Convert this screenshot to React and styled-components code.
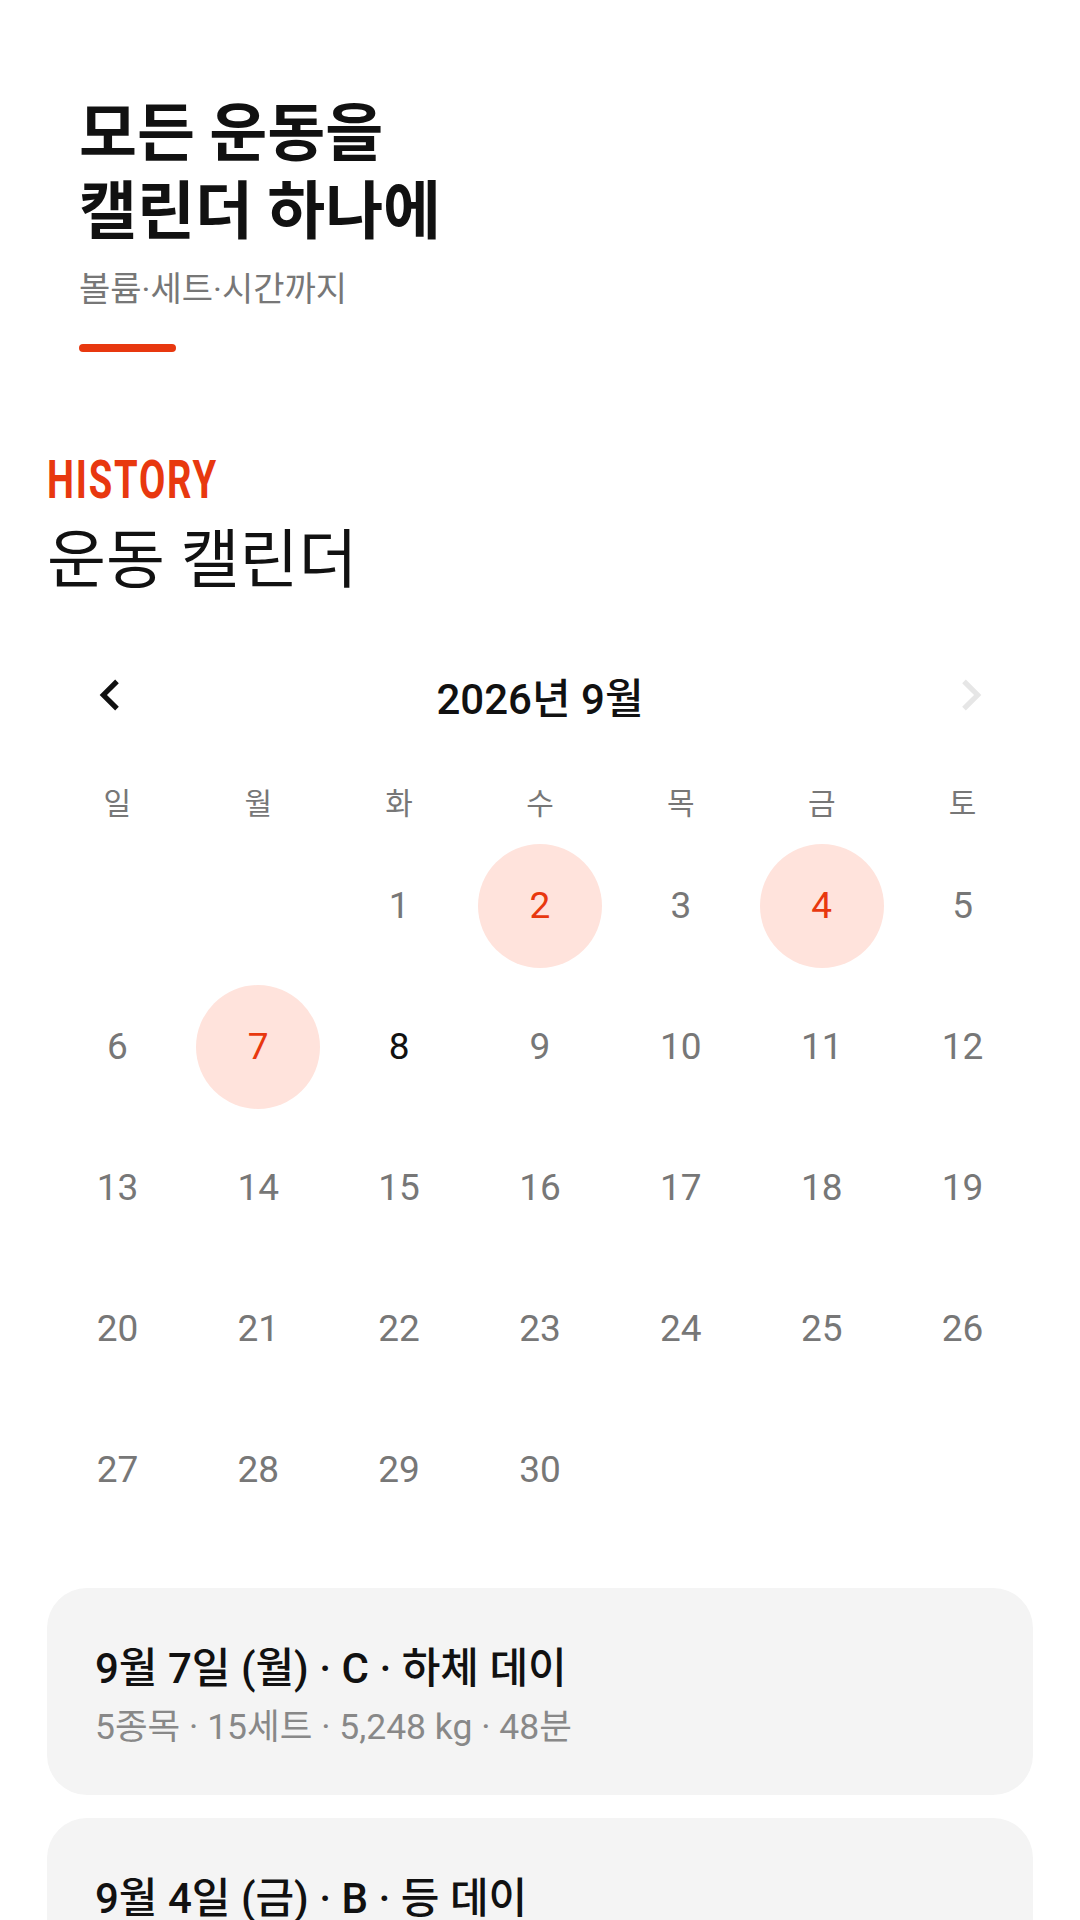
import React from "react";
import styled, { createGlobalStyle } from "styled-components";

const GlobalStyle = createGlobalStyle`
  html, body {
    margin: 0;
    padding: 0;
    background: #ffffff;
  }
  body {
    font-family: Roboto, "Noto Sans CJK KR", sans-serif;
    color: #111111;
  }
  * {
    box-sizing: border-box;
  }
`;

const ACCENT = "#e8380f";

const Page = styled.div`
  padding: 0 47px 60px 47px;
`;

const Hero = styled.header`
  padding: 89px 0 0 32px;
`;

const Headline = styled.h1`
  margin: 0;
  font-family: "Noto Sans CJK KR", Roboto, sans-serif;
  font-size: 63px;
  line-height: 78px;
  font-weight: 700;
  color: #111111;
`;

const Tagline = styled.p`
  margin: 22px 0 0 0;
  font-size: 34px;
  line-height: 44px;
  color: #777777;
`;

const AccentBar = styled.div`
  width: 97px;
  height: 8px;
  margin-top: 33px;
  border-radius: 4px;
  background: ${ACCENT};
`;

const SectionHead = styled.div`
  margin-top: 102px;
`;

const Eyebrow = styled.div`
  display: inline-block;
  font-family: Roboto, sans-serif;
  font-size: 53px;
  line-height: 53px;
  font-weight: 700;
  letter-spacing: 2.5px;
  color: ${ACCENT};
  transform: scaleX(0.72);
  transform-origin: left center;
`;

const SectionTitle = styled.h2`
  margin: 16px 0 0 0;
  font-size: 64px;
  line-height: 76px;
  font-weight: 400;
  color: #111111;
`;

const MonthBar = styled.div`
  display: grid;
  grid-template-columns: 1fr auto 1fr;
  align-items: center;
  height: 80px;
  margin-top: 56px;
`;

const NavButton = styled.button`
  display: flex;
  align-items: center;
  justify-content: center;
  width: 62px;
  height: 62px;
  padding: 0;
  border: none;
  background: transparent;
  color: ${(p) => (p.$disabled ? "#e6e6e6" : "#111111")};
  justify-self: ${(p) => (p.$side === "left" ? "start" : "end")};
  margin: ${(p) => (p.$side === "left" ? "0 0 0 32px" : "0 31px 0 0")};
`;

const MonthLabel = styled.div`
  font-size: 42px;
  font-weight: 500;
  color: #111111;
`;

const WeekRow = styled.div`
  display: grid;
  grid-template-columns: repeat(7, 1fr);
  height: 66px;
  margin-top: 33px;
  align-items: center;
`;

const WeekDay = styled.div`
  text-align: center;
  font-size: 30px;
  color: #777777;
`;

const DateGrid = styled.div`
  display: grid;
  grid-template-columns: repeat(7, 1fr);
  grid-auto-rows: 141px;
  margin-top: 1px;
`;

const DateCell = styled.div`
  display: flex;
  align-items: center;
  justify-content: center;
`;

const DateDot = styled.div`
  display: flex;
  align-items: center;
  justify-content: center;
  width: 124px;
  height: 124px;
  border-radius: 50%;
  font-size: 37px;
  background: ${(p) => (p.$done ? "#ffe3dc" : "transparent")};
  color: ${(p) => (p.$done ? ACCENT : p.$today ? "#111111" : "#777777")};
`;

const CardList = styled.div`
  display: flex;
  flex-direction: column;
  gap: 23px;
  margin-top: 48px;
`;

const Card = styled.div`
  background: #f4f4f4;
  border-radius: 40px;
  padding: 55px 48px 46px 48px;
`;

const CardTitle = styled.div`
  font-size: 42px;
  line-height: 52px;
  font-weight: 500;
  color: #111111;
`;

const CardMeta = styled.div`
  margin-top: 10px;
  font-size: 35.5px;
  line-height: 44px;
  color: #888888;
`;

const Chevron = ({ dir }) => (
  <svg width="62" height="62" viewBox="0 0 24 24" fill="currentColor">
    {dir === "left" ? (
      <path d="M15.41 7.41L14 6l-6 6 6 6 1.41-1.41L10.83 12z" />
    ) : (
      <path d="M10 6L8.59 7.41 13.17 12l-4.58 4.59L10 18l6-6z" />
    )}
  </svg>
);

const weekDays = ["일", "월", "화", "수", "목", "금", "토"];

// September 2026 starts on a Tuesday
const firstOffset = 2;
const daysInMonth = 30;
const doneDays = [2, 4, 7];
const today = 8;

const sessions = [
  {
    title: "9월 7일 (월) · C · 하체 데이",
    meta: "5종목 · 15세트 · 5,248 kg · 48분",
  },
  {
    title: "9월 4일 (금) · B · 등 데이",
    meta: "5종목 · 16세트 · 4,310 kg · 52분",
  },
  {
    title: "9월 2일 (수) · A · 가슴 데이",
    meta: "4종목 · 14세트 · 3,870 kg · 45분",
  },
];

const App = () => {
  const cells = [];
  for (let i = 0; i < firstOffset; i++) cells.push(null);
  for (let d = 1; d <= daysInMonth; d++) cells.push(d);

  return (
    <Page>
      <GlobalStyle />
      <Hero>
        <Headline>
          모든 운동을
          <br />
          캘린더 하나에
        </Headline>
        <Tagline>볼륨·세트·시간까지</Tagline>
        <AccentBar />
      </Hero>

      <SectionHead>
        <Eyebrow>HISTORY</Eyebrow>
        <SectionTitle>운동 캘린더</SectionTitle>
      </SectionHead>

      <MonthBar>
        <NavButton $side="left" aria-label="이전 달">
          <Chevron dir="left" />
        </NavButton>
        <MonthLabel>2026년 9월</MonthLabel>
        <NavButton $side="right" $disabled aria-label="다음 달">
          <Chevron dir="right" />
        </NavButton>
      </MonthBar>

      <WeekRow>
        {weekDays.map((w) => (
          <WeekDay key={w}>{w}</WeekDay>
        ))}
      </WeekRow>

      <DateGrid>
        {cells.map((d, i) => (
          <DateCell key={i}>
            {d && (
              <DateDot $done={doneDays.includes(d)} $today={d === today}>
                {d}
              </DateDot>
            )}
          </DateCell>
        ))}
      </DateGrid>

      <CardList>
        {sessions.map((s) => (
          <Card key={s.title}>
            <CardTitle>{s.title}</CardTitle>
            <CardMeta>{s.meta}</CardMeta>
          </Card>
        ))}
      </CardList>
    </Page>
  );
};

export default App;
